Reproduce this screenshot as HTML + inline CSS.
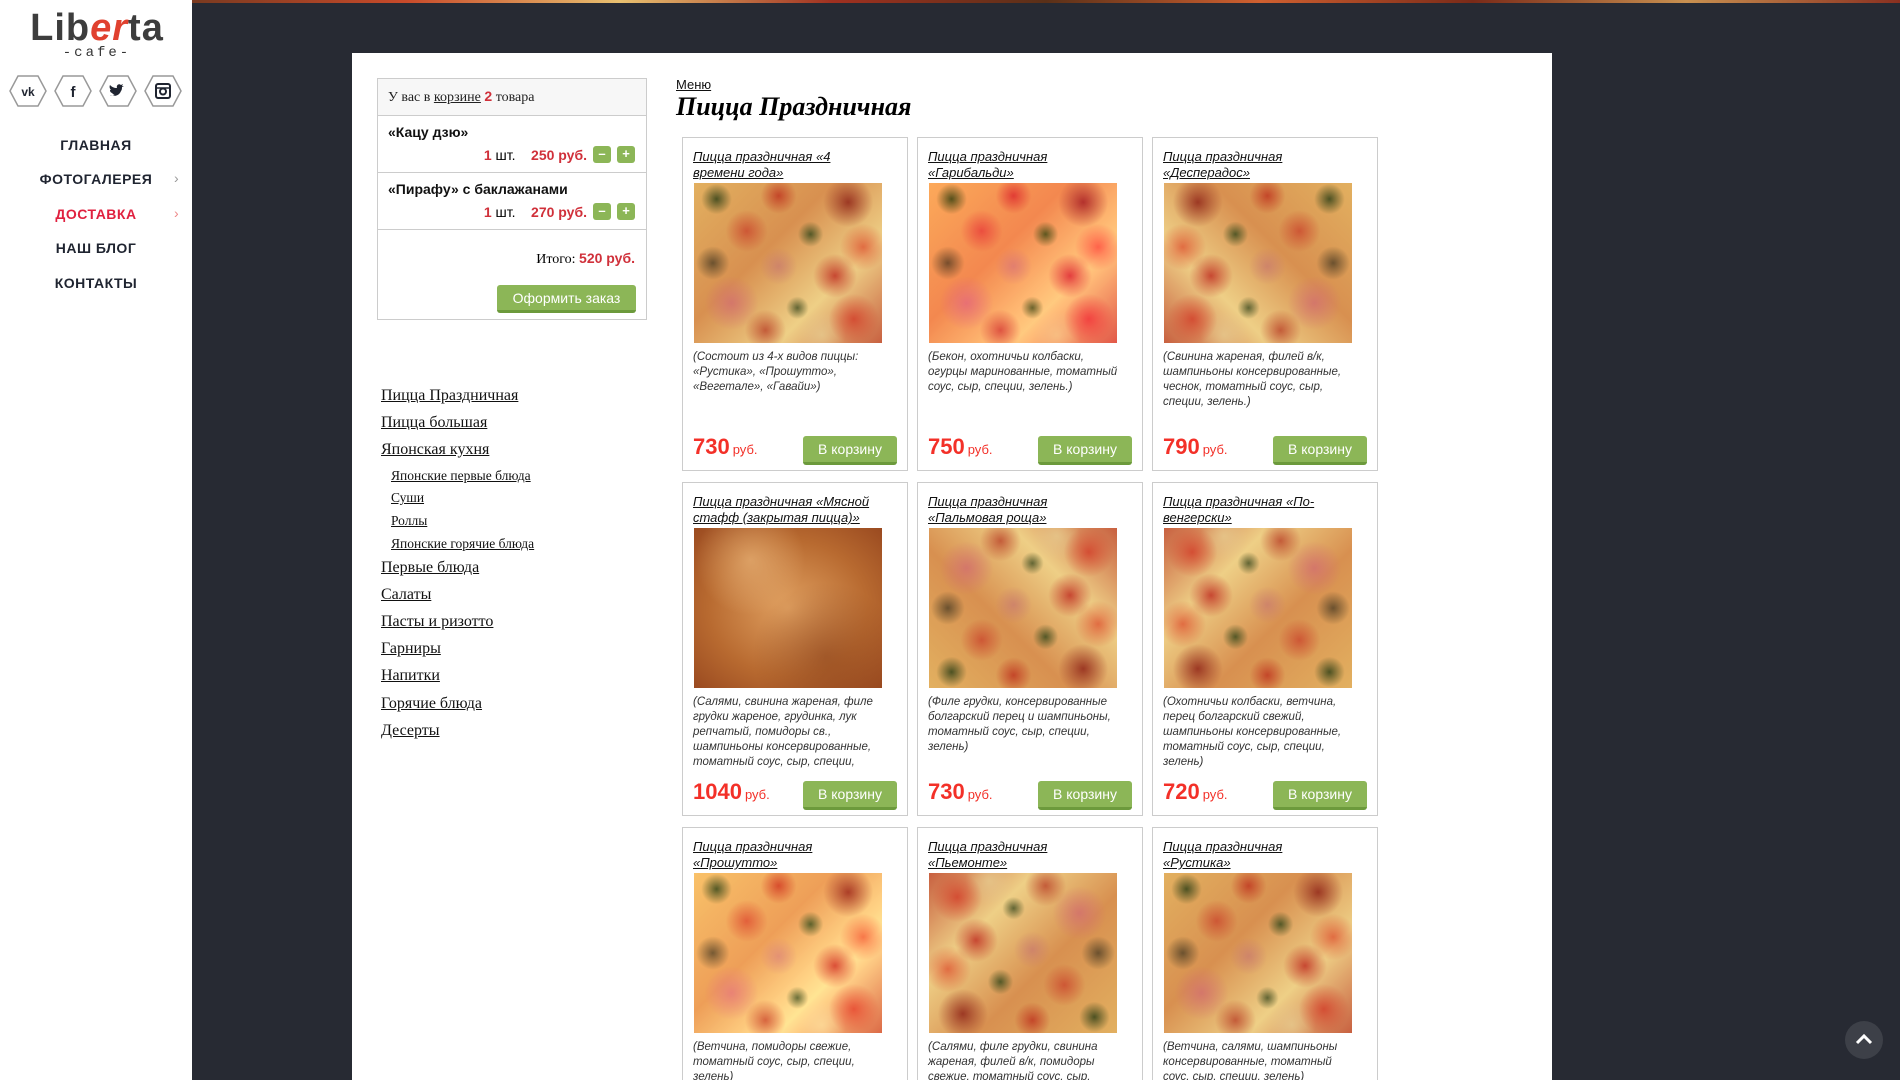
<!DOCTYPE html>
<html><head><meta charset="utf-8">
<style>
*{margin:0;padding:0;box-sizing:border-box}
html,body{width:1900px;height:1080px;overflow:hidden}
body{background:#272a33;font-family:"Liberation Sans",sans-serif}
#w{position:relative;width:1900px;height:1080px;overflow:hidden}
.strip{position:absolute;left:192px;top:0;width:1708px;height:3px;background:linear-gradient(90deg,#7a3a20,#c84a2a,#e8c070,#a03020,#5a3018,#d06030,#7a2a18,#c89050,#8a3020)}
.side{position:absolute;left:0;top:0;width:192px;height:1080px;background:#fff}
.logo{position:absolute;left:30px;top:8px;width:134px;text-align:center}
.logo .l{font-size:38px;font-weight:bold;color:#3d3d3d;letter-spacing:1px;line-height:40px}
.logo .l span{color:#e0412f;font-style:italic}
.logo .c{font-size:14px;color:#333;letter-spacing:3px;line-height:14px;margin-top:-2px;font-family:"Liberation Mono",monospace}
.soc{position:absolute;top:75px;width:38px;height:32px}
.nav{position:absolute;left:0;width:192px;text-align:center;font-weight:bold;font-size:14px;color:#1f2430;letter-spacing:.5px}
.nav.red{color:#e0213f}
.chev{position:absolute;left:174px;font-size:14px;color:#999}
.panel{position:absolute;left:352px;top:53px;width:1200px;height:1027px;background:#fff}
.cart{position:absolute;left:377px;top:78px;width:270px;height:242px;border:1px solid #ccc;font-size:13px}
.cart .hd{height:37px;background:#f7f7f7;border-bottom:1px solid #ccc;font-family:"Liberation Serif",serif;font-size:14px;padding:9px 10px;color:#222}
.cart .hd u{color:#222}
.red2{color:#d0303a;font-weight:bold;font-family:"Liberation Sans",sans-serif}
.it{height:57px;border-bottom:1px solid #ccc;padding:8px 10px;position:relative}
.it b{font-size:14px;color:#111}
.it .r{position:absolute;right:11px;top:30px;font-size:14px;display:flex;align-items:center}
.pm{display:inline-block;width:18px;height:17px;background:#8cb657;border-radius:3px;color:#fff;text-align:center;line-height:16px;font-weight:bold;font-size:13px;margin-left:6px}
.tot{position:absolute;right:11px;top:171px;font-family:"Liberation Serif",serif;font-size:14px}
.order{position:absolute;right:10px;top:206px;width:139px;height:28px;background:#8cb657;border-bottom:3px solid #6c9a3c;border-radius:3px;color:#fff;font-size:14px;text-align:center;line-height:26px}
.lm{position:absolute;left:381px;font-family:"Liberation Serif",serif;font-size:16px;color:#111;text-decoration:underline}
.lm.s{left:391px;font-size:13.5px}
.crumb{position:absolute;left:676px;top:77px;font-size:13px;text-decoration:underline;color:#111}
h1{position:absolute;left:676px;top:92px;font-family:"Liberation Serif",serif;font-style:italic;font-weight:bold;font-size:26px;color:#000}
.card{position:absolute;width:226px;height:334px;border:1px solid #ccc;background:#fff}
.card.last{height:253px;border-bottom:none}
.card .t{position:absolute;left:10px;top:11px;width:200px;font-size:13px;font-style:italic;text-decoration:underline;line-height:16px;color:#111}
.card .im{position:absolute;left:11px;top:45px;width:188px;height:160px}
.card .d{position:absolute;left:10px;top:212px;width:196px;font-size:11.5px;font-style:italic;line-height:15px;color:#333}
.card .p{position:absolute;left:10px;top:296px;font-size:22px;font-weight:bold;color:#f33028}
.card .p small{font-size:13px;font-weight:normal;margin-left:3px}
.card .b{position:absolute;left:120px;top:298px;width:94px;height:29px;background:#8cb657;border-bottom:3px solid #6c9a3c;border-radius:3px;color:#fff;font-size:14px;text-align:center;line-height:27px}
.pz{background:
radial-gradient(circle at 12% 10%,rgba(40,60,20,.8),transparent 7%),
radial-gradient(circle at 45% 8%,rgba(190,50,30,.8),transparent 10%),
radial-gradient(circle at 82% 12%,rgba(140,30,20,.8),transparent 12%),
radial-gradient(circle at 28% 30%,rgba(200,60,40,.7),transparent 12%),
radial-gradient(circle at 62% 32%,rgba(50,70,25,.8),transparent 8%),
radial-gradient(circle at 90% 40%,rgba(220,70,40,.7),transparent 12%),
radial-gradient(circle at 10% 50%,rgba(60,50,30,.7),transparent 9%),
radial-gradient(circle at 45% 52%,rgba(200,120,110,.7),transparent 14%),
radial-gradient(circle at 75% 58%,rgba(190,40,30,.8),transparent 13%),
radial-gradient(circle at 20% 75%,rgba(210,110,110,.8),transparent 14%),
radial-gradient(circle at 55% 78%,rgba(40,60,20,.7),transparent 7%),
radial-gradient(circle at 85% 85%,rgba(210,60,40,.8),transparent 12%),
radial-gradient(circle at 38% 92%,rgba(180,50,30,.7),transparent 11%),
radial-gradient(circle at 68% 95%,rgba(230,200,140,.8),transparent 12%),
linear-gradient(135deg,#e2b060,#d89050 40%,#eecf86 70%,#c86040)}
.pz2{background:radial-gradient(circle at 30% 20%,rgba(240,190,130,.6),transparent 30%),radial-gradient(circle at 70% 80%,rgba(120,50,20,.4),transparent 40%),radial-gradient(ellipse at 50% 50%,#e0a060,#b86a30 60%,#9a4a20)}
.up{position:absolute;left:1845px;top:1021px;width:38px;height:38px;border-radius:50%;background:#3d4048}
</style></head><body><div id="w">
<div class="strip"></div>
<div class="side">
 <div class="logo"><div class="l">Lib<span>er</span>ta</div><div class="c">-cafe-</div></div>
 <svg class="soc" style="left:9px" viewBox="0 0 38 32"><polygon points="9,1 29,1 37,16 29,31 9,31 1,16" fill="none" stroke="#999" stroke-width="1.5"/><text x="19" y="21" text-anchor="middle" font-size="12" font-weight="bold" fill="#1f2430" font-family="Liberation Sans">vk</text></svg>
 <svg class="soc" style="left:54px" viewBox="0 0 38 32"><polygon points="9,1 29,1 37,16 29,31 9,31 1,16" fill="none" stroke="#999" stroke-width="1.5"/><text x="19" y="22" text-anchor="middle" font-size="15" font-weight="bold" fill="#1f2430" font-family="Liberation Sans">f</text></svg>
 <svg class="soc" style="left:99px" viewBox="0 0 38 32"><polygon points="9,1 29,1 37,16 29,31 9,31 1,16" fill="none" stroke="#999" stroke-width="1.5"/><path d="M11 20c4 2 9 1 11-4 1-1 1-3 1-4l2-1-2 0 1-2-2 1c-2-2-5 0-4 3-3 0-5-1-7-3-1 2 0 4 1 5l-1 0c0 2 1 3 3 3l-1 0c1 1 2 2 3 2-2 1-4 1-5 0z" fill="#1f2430"/></svg>
 <svg class="soc" style="left:144px" viewBox="0 0 38 32"><polygon points="9,1 29,1 37,16 29,31 9,31 1,16" fill="none" stroke="#999" stroke-width="1.5"/><rect x="12" y="9" width="14" height="14" rx="2" fill="none" stroke="#1f2430" stroke-width="2"/><circle cx="19" cy="16.5" r="3" fill="none" stroke="#1f2430" stroke-width="2"/><line x1="12" y1="13" x2="26" y2="13" stroke="#1f2430" stroke-width="1.5"/></svg>
 <div class="nav" style="top:137px">ГЛАВНАЯ</div>
 <div class="nav" style="top:171px">ФОТОГАЛЕРЕЯ</div><div class="chev" style="top:170px">›</div>
 <div class="nav red" style="top:206px">ДОСТАВКА</div><div class="chev" style="top:205px;color:#e88">›</div>
 <div class="nav" style="top:240px">НАШ БЛОГ</div>
 <div class="nav" style="top:275px">КОНТАКТЫ</div>
</div>
<div class="panel"></div>
<div class="cart">
 <div class="hd">У вас в <u>корзине</u> <span class="red2">2</span> товара</div>
 <div class="it"><b>«Кацу дзю»</b><div class="r"><span class="red2">1</span>&nbsp;шт.&nbsp;&nbsp;&nbsp;&nbsp;<span class="red2">250 руб.</span><span class="pm">–</span><span class="pm">+</span></div></div>
 <div class="it"><b>«Пирафу» с баклажанами</b><div class="r"><span class="red2">1</span>&nbsp;шт.&nbsp;&nbsp;&nbsp;&nbsp;<span class="red2">270 руб.</span><span class="pm">–</span><span class="pm">+</span></div></div>
 <div class="tot">Итого: <span class="red2">520 руб.</span></div>
 <div class="order">Оформить заказ</div>
</div>
<div class="lm" style="top:387px">Пицца Праздничная</div>
<div class="lm" style="top:414px">Пицца большая</div>
<div class="lm" style="top:441px">Японская кухня</div>
<div class="lm s" style="top:468px">Японские первые блюда</div>
<div class="lm s" style="top:490px">Суши</div>
<div class="lm s" style="top:513px">Роллы</div>
<div class="lm s" style="top:536px">Японские горячие блюда</div>
<div class="lm" style="top:559px">Первые блюда</div>
<div class="lm" style="top:586px">Салаты</div>
<div class="lm" style="top:613px">Пасты и ризотто</div>
<div class="lm" style="top:640px">Гарниры</div>
<div class="lm" style="top:667px">Напитки</div>
<div class="lm" style="top:695px">Горячие блюда</div>
<div class="lm" style="top:722px">Десерты</div>
<div class="crumb">Меню</div>
<h1>Пицца Праздничная</h1>

<div class="card" style="left:682px;top:137px"><div class="t">Пицца праздничная «4<br>времени года»</div><div class="im pz"></div><div class="d">(Состоит из 4-х видов пиццы: «Рустика», «Прошутто», «Вегетале», «Гавайи»)</div><div class="p">730<small>руб.</small></div><div class="b">В корзину</div></div>
<div class="card" style="left:917px;top:137px"><div class="t">Пицца праздничная<br>«Гарибальди»</div><div class="im pz" style="filter:hue-rotate(-10deg) saturate(1.2)"></div><div class="d">(Бекон, охотничьи колбаски, огурцы маринованные, томатный соус, сыр, специи, зелень.)</div><div class="p">750<small>руб.</small></div><div class="b">В корзину</div></div>
<div class="card" style="left:1152px;top:137px"><div class="t">Пицца праздничная<br>«Десперадос»</div><div class="im pz" style="transform:scaleX(-1)"></div><div class="d">(Свинина жареная, филей в/к, шампиньоны консервированные, чеснок, томатный соус, сыр, специи, зелень.)</div><div class="p">790<small>руб.</small></div><div class="b">В корзину</div></div>

<div class="card" style="left:682px;top:482px"><div class="t">Пицца праздничная «Мясной<br>стафф (закрытая пицца)»</div><div class="im pz2"></div><div class="d">(Салями, свинина жареная, филе грудки жареное, грудинка, лук репчатый, помидоры св., шампиньоны консервированные, томатный соус, сыр, специи,</div><div class="p">1040<small>руб.</small></div><div class="b">В корзину</div></div>
<div class="card" style="left:917px;top:482px"><div class="t">Пицца праздничная<br>«Пальмовая роща»</div><div class="im pz" style="transform:scaleY(-1)"></div><div class="d">(Филе грудки, консервированные болгарский перец и шампиньоны, томатный соус, сыр, специи, зелень)</div><div class="p">730<small>руб.</small></div><div class="b">В корзину</div></div>
<div class="card" style="left:1152px;top:482px"><div class="t">Пицца праздничная «По-<br>венгерски»</div><div class="im pz" style="transform:rotate(180deg)"></div><div class="d">(Охотничьи колбаски, ветчина, перец болгарский свежий, шампиньоны консервированные, томатный соус, сыр, специи, зелень)</div><div class="p">720<small>руб.</small></div><div class="b">В корзину</div></div>

<div class="card last" style="left:682px;top:827px"><div class="t">Пицца праздничная<br>«Прошутто»</div><div class="im pz" style="filter:brightness(1.1)"></div><div class="d">(Ветчина, помидоры свежие, томатный соус, сыр, специи, зелень)</div></div>
<div class="card last" style="left:917px;top:827px"><div class="t">Пицца праздничная<br>«Пьемонте»</div><div class="im pz" style="transform:scale(-1,-1)"></div><div class="d">(Салями, филе грудки, свинина жареная, филей в/к, помидоры свежие, томатный соус, сыр,</div></div>
<div class="card last" style="left:1152px;top:827px"><div class="t">Пицца праздничная<br>«Рустика»</div><div class="im pz"></div><div class="d">(Ветчина, салями, шампиньоны консервированные, томатный соус, сыр, специи, зелень)</div></div>
<div class="up"><svg width="38" height="38" viewBox="0 0 38 38"><path d="M12 22l7-7 7 7" fill="none" stroke="#fff" stroke-width="3"/></svg></div>
</div></body></html>
